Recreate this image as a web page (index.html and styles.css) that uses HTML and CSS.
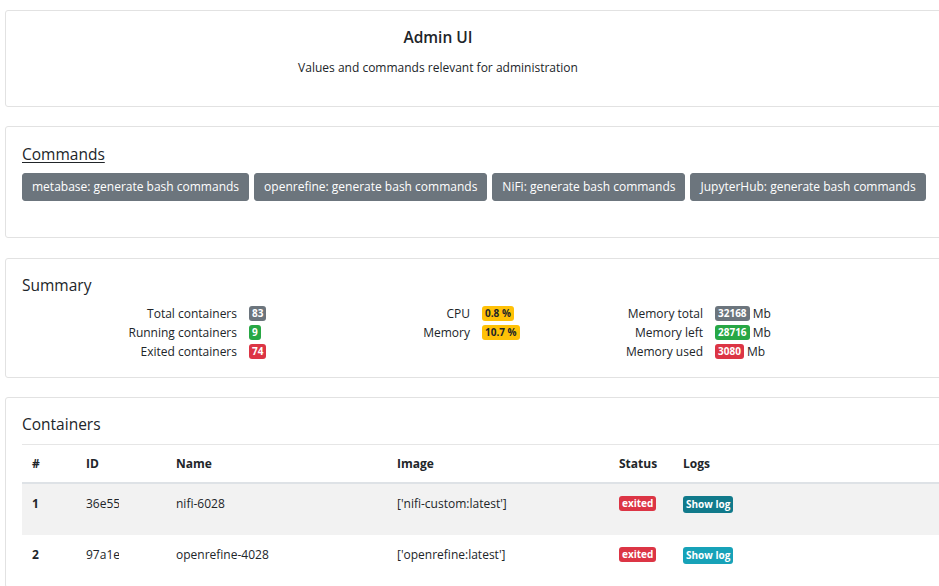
FILE: index.html
```html
<!DOCTYPE html>
<html>
<head>
<meta charset="utf-8">
<link rel="stylesheet" href="styles.css">
</head>
<body>
<div class="page">
  <section class="card header-card">
    <div class="header-inner">
      <h1 class="title">Admin UI</h1>
      <p class="subtitle">Values and commands relevant for administration</p>
    </div>
  </section>

  <section class="card commands-card">
    <h2 class="heading underline">Commands</h2>
    <div class="btn-row">
      <button class="btn">metabase: generate bash commands</button>
      <button class="btn">openrefine: generate bash commands</button>
      <button class="btn">NiFi: generate bash commands</button>
      <button class="btn">JupyterHub: generate bash commands</button>
    </div>
  </section>

  <section class="card summary-card">
    <h2 class="heading">Summary</h2>
    <div class="summary-grid">
      <div class="sum-col">
        <span class="lbl">Total containers</span><span class="val"><span class="badge b-sec">83</span></span>
        <span class="lbl">Running containers</span><span class="val"><span class="badge b-ok">9</span></span>
        <span class="lbl">Exited containers</span><span class="val"><span class="badge b-err">74</span></span>
      </div>
      <div class="sum-col">
        <span class="lbl">CPU</span><span class="val"><span class="badge b-warn">0.8 %</span></span>
        <span class="lbl">Memory</span><span class="val"><span class="badge b-warn">10.7 %</span></span>
      </div>
      <div class="sum-col">
        <span class="lbl">Memory total</span><span class="val"><span class="badge b-sec">32168</span> Mb</span>
        <span class="lbl">Memory left</span><span class="val"><span class="badge b-ok">28716</span> Mb</span>
        <span class="lbl">Memory used</span><span class="val"><span class="badge b-err">3080</span> Mb</span>
      </div>
    </div>
  </section>

  <section class="card containers-card">
    <h2 class="heading">Containers</h2>
    <table class="tbl">
      <thead>
        <tr><th class="c-num">#</th><th class="c-id">ID</th><th class="c-name">Name</th><th class="c-img">Image</th><th class="c-status">Status</th><th class="c-logs">Logs</th></tr>
      </thead>
      <tbody>
        <tr class="striped">
          <td class="c-num"><b>1</b></td>
          <td class="c-id"><div class="clip">36e55a1b2c</div></td>
          <td class="c-name">nifi-6028</td>
          <td class="c-img">['nifi-custom:latest']</td>
          <td class="c-status"><span class="badge b-err">exited</span></td>
          <td class="c-logs"><span class="badge btn-badge b-info-dark">Show log</span></td>
        </tr>
        <tr>
          <td class="c-num"><b>2</b></td>
          <td class="c-id"><div class="clip">97a1e0c4d2</div></td>
          <td class="c-name">openrefine-4028</td>
          <td class="c-img">['openrefine:latest']</td>
          <td class="c-status"><span class="badge b-err">exited</span></td>
          <td class="c-logs"><span class="badge btn-badge b-info">Show log</span></td>
        </tr>
      </tbody>
    </table>
  </section>
</div>
</body>
</html>
```

FILE: styles.css
```css
html, body {
  margin: 0;
  padding: 0;
  background: #fff;
  overflow: hidden;
}
body {
  font-family: "Open Sans", "Noto Sans", sans-serif;
  font-size: 12px;
  color: #212529;
}
.page {
  padding: 10px 0 0 5px;
  width: 1000px;
}
.card {
  border: 1px solid #e2e2e2;
  border-radius: 3px;
  background: #fff;
  margin-bottom: 19px;
  padding: 16px 16px;
}
.header-card {
  height: 97px;
  box-sizing: border-box;
  padding: 0;
}
.header-inner {
  width: 864px;
  text-align: center;
}
.title {
  margin: 0;
  padding-top: 15px;
  font-size: 15.5px;
  font-weight: 600;
  line-height: 22px;
}
.subtitle {
  margin: 10px 0 0;
  line-height: 20px;
}
.heading {
  margin: 0;
  font-size: 15.5px;
  font-weight: 500;
  line-height: 20px;
}
.underline {
  text-decoration: underline;
  text-underline-offset: 2px;
}
.commands-card {
  padding-top: 17px;
  padding-bottom: 36px;
  margin-bottom: 20px;
}
.btn-row {
  display: flex;
  gap: 5px;
  margin-top: 9px;
}
.btn {
  font-family: inherit;
  font-size: 12px;
  color: #fff;
  background: #6c757d;
  border: 1px solid #6c757d;
  border-radius: 3px;
  height: 28px;
  padding: 0 9px;
  line-height: 26px;
}
.summary-card {
  padding-bottom: 16px;
}
.summary-grid {
  display: grid;
  grid-template-columns: 233px 233px 233px;
  margin-top: 9px;
}
.sum-col {
  display: grid;
  grid-template-columns: 215px auto;
  column-gap: 12px;
  grid-auto-rows: 19px;
  align-items: center;
}
.lbl { text-align: right; white-space: nowrap; }
.val { white-space: nowrap; }
.badge {
  display: inline-block;
  font-size: 10px;
  font-weight: 700;
  line-height: 1;
  padding: 2px 3px 3px;
  border-radius: 3px;
  color: #fff;
  vertical-align: 1px;
}
.btn-badge {
  padding: 3px 3px 4px;
  vertical-align: 0;
}
.b-sec { background: #6c757d; }
.b-ok { background: #28a745; }
.b-err { background: #dc3545; }
.b-warn { background: #ffc107; color: #212529; }
.b-info { background: #17a2b8; }
.b-info-dark { background: #117a8b; }
.containers-card {
  padding-bottom: 0;
}
.tbl {
  margin-top: 10px;
  width: 100%;
  border-collapse: collapse;
}
.tbl th {
  text-align: left;
  font-weight: 700;
  border-top: 1px solid #e6e6e6;
  border-bottom: 2px solid #dee2e6;
  height: 37px;
  padding: 0 10px;
}
.tbl td {
  height: 52px;
  vertical-align: top;
  padding: 10px 10px 0;
  line-height: 20px;
  box-sizing: border-box;
}
.striped td { background: #f2f2f2; }
.c-num { width: 34px; }
.c-id { width: 70px; }
.c-name { width: 201px; }
.c-img { width: 202px; }
.c-status { width: 44px; }
.clip {
  width: 33px;
  overflow: hidden;
  white-space: nowrap;
}
```
